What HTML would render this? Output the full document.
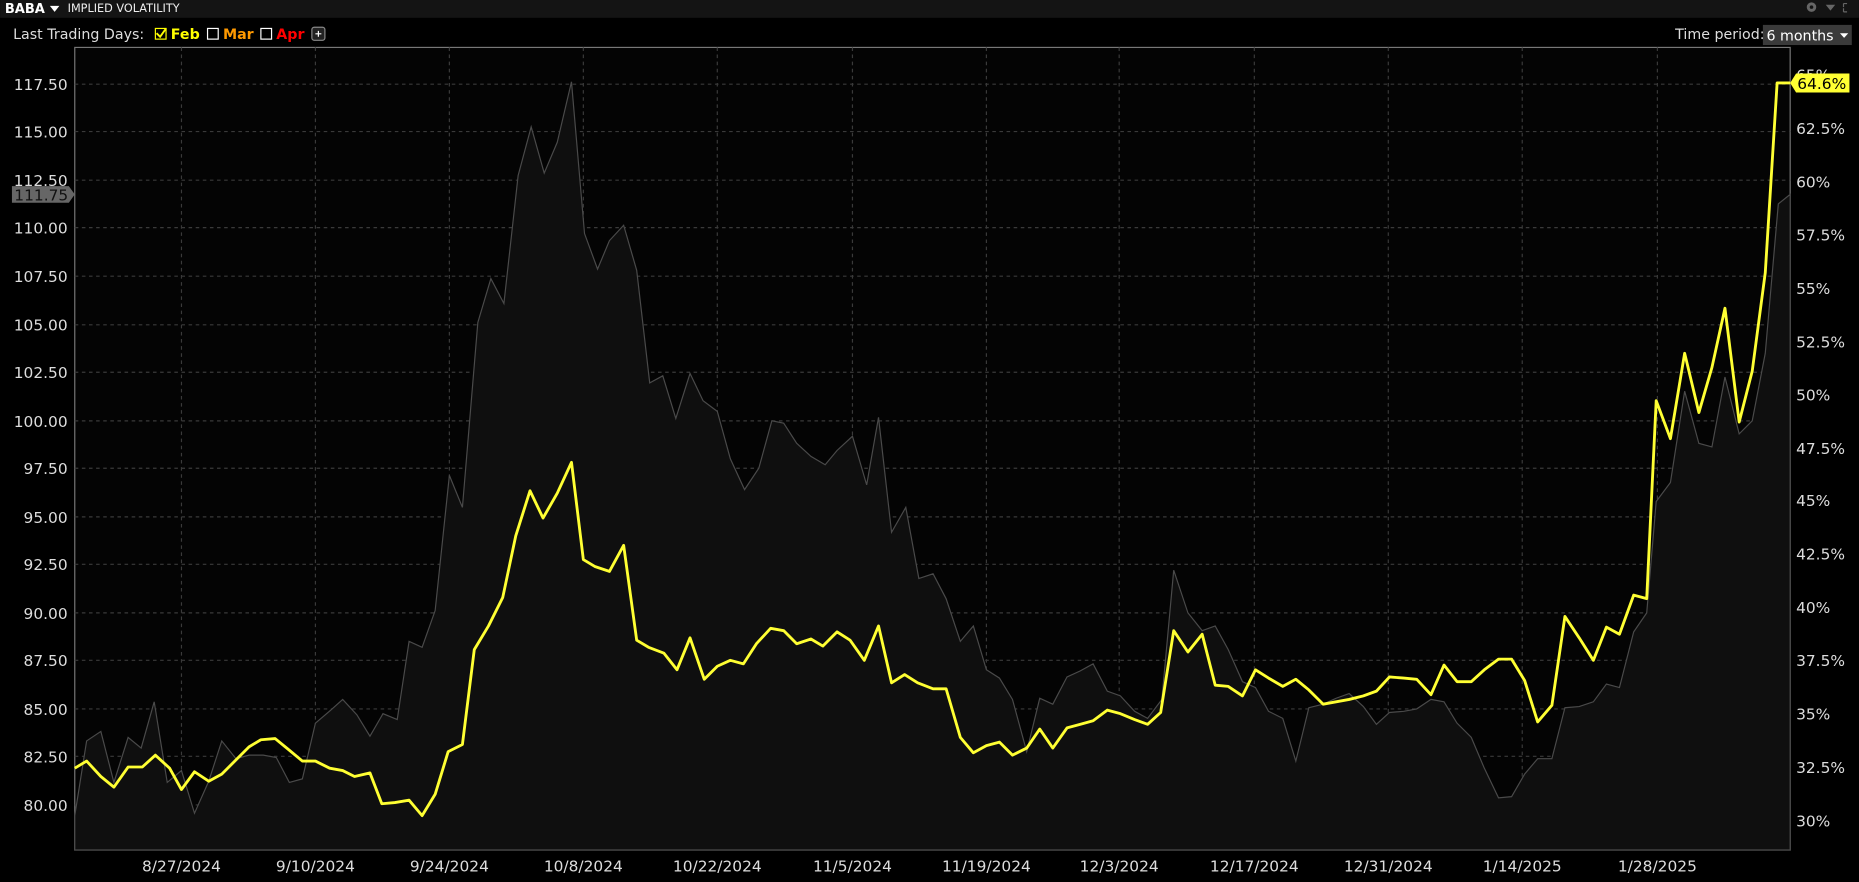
<!DOCTYPE html>
<html><head><meta charset="utf-8"><style>
html,body{margin:0;padding:0;background:#000;width:1859px;height:882px;overflow:hidden}
svg{display:block}
text{font-family:"DejaVu Sans","Liberation Sans",sans-serif}
</style></head><body>
<svg width="1859" height="882" viewBox="0 0 1568 744" xmlns="http://www.w3.org/2000/svg">
<rect x="0" y="0" width="1568" height="744" fill="#000"/>
<rect x="0" y="0" width="1568" height="15" fill="#141414"/>
<text x="4" y="11" font-size="11" font-weight="bold" fill="#fff">BABA</text>
<path d="M42 5 L50 5 L46 10 Z" fill="#fff"/>
<text x="57" y="10" font-size="9.5" fill="#eee">IMPLIED VOLATILITY</text>
<circle cx="1528" cy="6" r="4" fill="#666"/><circle cx="1528" cy="6" r="1.5" fill="#141414"/>
<path d="M1540 4 L1548 4 L1544 9 Z" fill="#666"/>
<path d="M1555 3 v3 M1555 3 h3 M1555 10 v-3 M1555 10 h3" stroke="#666" stroke-width="1" fill="none"/>
<text x="11" y="33" font-size="12" fill="#ddd">Last Trading Days:</text>
<rect x="131" y="24" width="9" height="9" fill="none" stroke="#ff0" stroke-width="1"/>
<path d="M132 28 L135 31 L140 24" stroke="#ff0" stroke-width="1.6" fill="none"/>
<text x="144" y="33" font-size="12" font-weight="bold" fill="#ff0">Feb</text>
<rect x="175" y="24" width="9" height="9" fill="none" stroke="#fff" stroke-width="1"/>
<text x="188" y="33" font-size="12" font-weight="bold" fill="#f90">Mar</text>
<rect x="220" y="24" width="9" height="9" fill="none" stroke="#fff" stroke-width="1"/>
<text x="233" y="33" font-size="12" font-weight="bold" fill="#f00">Apr</text>
<rect x="263" y="23" width="11" height="11" rx="2" fill="#222" stroke="#888"/>
<path d="M266 28.5h5M268.5 26v5" stroke="#fff"/>
<text x="1413" y="33" font-size="12" fill="#ddd">Time period:</text>
<rect x="1487" y="21" width="75" height="17" fill="#3a3a3a"/>
<text x="1490" y="34" font-size="12" fill="#fff">6 months</text>
<path d="M1552 28 L1559 28 L1555.5 32 Z" fill="#fff"/>
<rect x="63" y="40" width="1447" height="677" fill="#040404" stroke="#777" stroke-width="1"/>
<g stroke="#3a3a3a" stroke-width="1" stroke-dasharray="3,3">
<path d="M63 71H1510M63 111H1510M63 152H1510M63 192H1510M63 233H1510M63 274H1510M63 314H1510M63 355H1510M63 395H1510M63 436H1510M63 476H1510M63 517H1510M63 557H1510M63 598H1510M63 638H1510M63 679H1510"/>
<path d="M153 40V717M266 40V717M379 40V717M492 40V717M605 40V717M719 40V717M832 40V717M944 40V717M1058 40V717M1171 40V717M1284 40V717M1398 40V717"/>
</g>
<path fill="#0f0f0f" stroke="#4a4a4a" stroke-width="1" d="M63 717L63 688 73 625 85 617 96 660 108 622 119 631 130 592 141 660 153 650 164 686 176 659 187 625 199 640 210 637 222 637 233 639 244 660 255 657 266 610 279 599 289 590 301 603 312 621 323 602 335 607 345 541 356 546 367 515 379 401 390 428 403 272 414 235 425 256 437 148 448 107 459 146 470 120 482 69 493 197 504 227 514 203 526 190 537 228 548 323 559 317 570 353 582 315 593 338 605 347 616 387 628 413 640 395 651 355 661 357 672 374 684 385 696 392 706 380 719 368 731 409 741 352 752 449 764 428 775 488 787 484 798 505 810 541 821 528 832 565 843 572 854 590 866 634 877 589 888 594 900 571 911 566 922 560 934 583 945 587 957 600 968 606 980 590 990 481 1002 517 1014 532 1025 528 1036 548 1048 575 1059 580 1070 600 1082 606 1093 642 1104 597 1116 594 1127 589 1138 585 1150 596 1161 611 1172 601 1184 600 1195 598 1207 590 1218 592 1229 610 1241 622 1252 648 1264 673 1275 672 1286 653 1297 640 1309 640 1320 597 1332 596 1344 592 1355 577 1366 580 1378 533 1389 517 1397 423 1409 407 1421 330 1433 374 1444 377 1455 318 1467 366 1478 355 1489 298 1500 172 1510 164 1510 717Z"/>
<polyline fill="none" stroke="#ffff33" stroke-width="2.4" stroke-linejoin="round" points="63,648 73,642 85,655 96,664 108,647 120,647 131,637 143,648 153,666 164,651 176,659 187,653 199,641 210,630 220,624 232,623 243,632 255,642 266,642 278,648 289,650 299,655 312,652 322,678 333,677 345,675 356,688 367,670 378,634 390,628 400,548 412,528 424,504 435,452 447,414 458,437 470,416 482,390 492,472 502,478 514,482 526,460 537,540 547,546 560,551 571,565 582,538 594,573 605,562 616,557 627,560 638,543 650,530 661,532 672,543 684,539 694,545 706,533 717,540 729,557 741,528 752,576 763,569 774,576 787,581 798,581 810,622 821,635 832,629 843,626 854,637 866,631 877,615 888,631 900,614 911,611 922,608 934,599 945,602 957,607 968,611 979,601 990,532 1002,550 1014,535 1025,578 1036,579 1048,587 1059,565 1070,572 1082,579 1093,573 1104,582 1116,594 1127,592 1138,590 1150,587 1161,583 1172,571 1184,572 1195,573 1207,586 1218,561 1229,575 1241,575 1252,565 1264,556 1275,556 1286,574 1297,609 1309,595 1320,520 1332,538 1344,557 1355,529 1366,535 1378,502 1389,505 1397,338 1409,370 1421,298 1433,348 1444,310 1455,260 1467,356 1478,313 1489,230 1499,70 1510,70"/>
<g font-size="13" fill="#ddd" text-anchor="end">
<text x="57" y="76">117.50</text><text x="57" y="116">115.00</text><text x="57" y="157">112.50</text><text x="57" y="197">110.00</text><text x="57" y="238">107.50</text><text x="57" y="279">105.00</text><text x="57" y="319">102.50</text><text x="57" y="360">100.00</text><text x="57" y="400">97.50</text><text x="57" y="441">95.00</text><text x="57" y="481">92.50</text><text x="57" y="522">90.00</text><text x="57" y="562">87.50</text><text x="57" y="603">85.00</text><text x="57" y="643">82.50</text><text x="57" y="684">80.00</text>
</g>
<path d="M10 157 H58 L63 164 L58 171 H10 Z" fill="#666"/>
<text x="12" y="169" font-size="13" fill="#111">111.75</text>
<g font-size="13" fill="#ddd">
<text x="1515" y="68">65%</text><text x="1515" y="113">62.5%</text><text x="1515" y="158">60%</text><text x="1515" y="203">57.5%</text><text x="1515" y="248">55%</text><text x="1515" y="293">52.5%</text><text x="1515" y="338">50%</text><text x="1515" y="383">47.5%</text><text x="1515" y="427">45%</text><text x="1515" y="472">42.5%</text><text x="1515" y="517">40%</text><text x="1515" y="562">37.5%</text><text x="1515" y="607">35%</text><text x="1515" y="652">32.5%</text><text x="1515" y="697">30%</text>
</g>
<path d="M1515 62 H1560 V78 H1515 L1510 70 Z" fill="#ffff33"/>
<text x="1516" y="75" font-size="13" fill="#000">64.6%</text>
<g font-size="13" fill="#ddd" text-anchor="middle">
<text x="153" y="735">8/27/2024</text><text x="266" y="735">9/10/2024</text><text x="379" y="735">9/24/2024</text><text x="492" y="735">10/8/2024</text><text x="605" y="735">10/22/2024</text><text x="719" y="735">11/5/2024</text><text x="832" y="735">11/19/2024</text><text x="944" y="735">12/3/2024</text><text x="1058" y="735">12/17/2024</text><text x="1171" y="735">12/31/2024</text><text x="1284" y="735">1/14/2025</text><text x="1398" y="735">1/28/2025</text>
</g>
</svg>
</body></html>
